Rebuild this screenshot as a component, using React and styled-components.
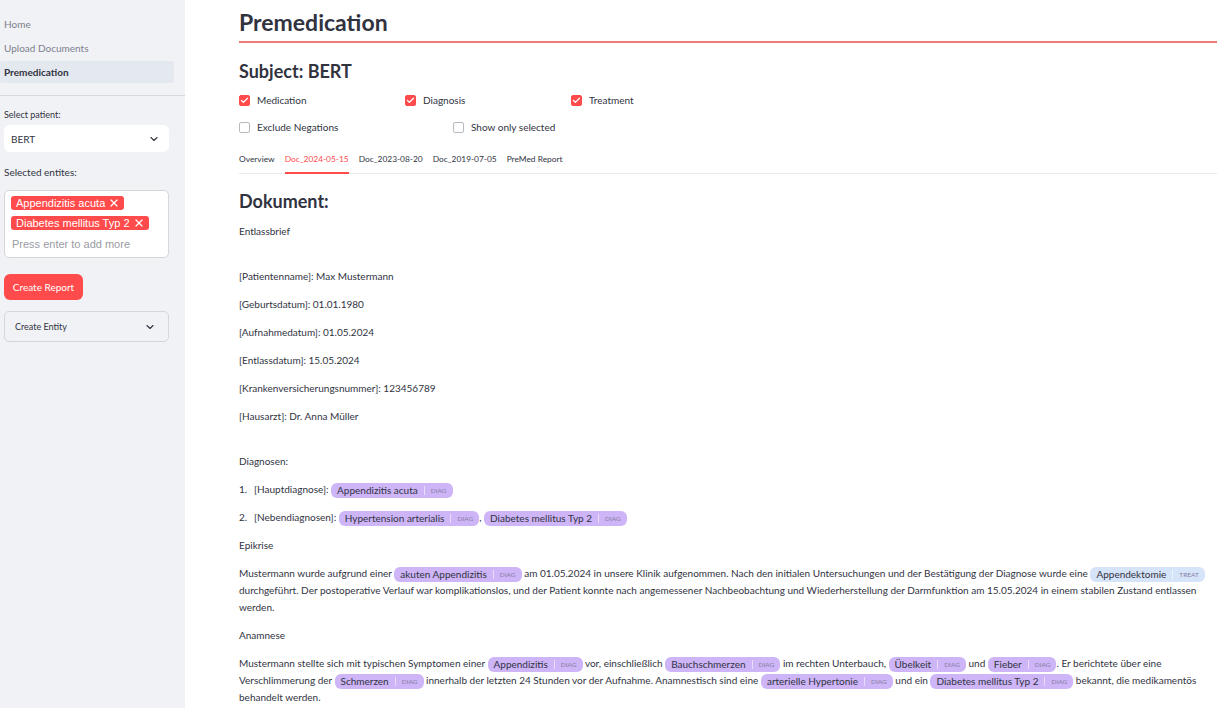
import styled, { createGlobalStyle } from 'styled-components'
import { ChevronDown, X, Check } from 'lucide-react'

const GlobalStyle = createGlobalStyle`
  html, body {
    margin: 0;
    padding: 0;
    background: #ffffff;
  }
  body {
    font-family: Lato, "Noto Sans", sans-serif;
    color: #31333f;
  }
  * {
    box-sizing: border-box;
  }
`

const colors = {
  text: '#31333f',
  red: '#ff4b4b',
  sidebar: '#f0f2f6',
  border: '#d6d6d9',
  diag: '#cdb5f7',
  treat: '#d6e4f9',
}

const Ent = ({ label, tag = 'DIAG' }) => (
  <Entity $kind={tag}>
    {label}
    <EntityTag>{tag}</EntityTag>
  </Entity>
)

const Box = ({ checked, label }) => (
  <CheckItem>
    <CheckSquare $checked={checked}>
      {checked && <Check size={9} strokeWidth={3.5} color="#fff" />}
    </CheckSquare>
    {label}
  </CheckItem>
)

const App = () => {
  const tabs = ['Overview', 'Doc_2024-05-15', 'Doc_2023-08-20', 'Doc_2019-07-05', 'PreMed Report']

  return (
    <>
      <GlobalStyle />
      <Layout>
        <Sidebar>
          <Nav>
            <NavItem>Home</NavItem>
            <NavItem>Upload Documents</NavItem>
            <NavItem $active>Premedication</NavItem>
          </Nav>
          <SideBody>
            <FieldLabel>Select patient:</FieldLabel>
            <SelectBox>
              BERT
              <ChevronDown size={12} strokeWidth={2.2} />
            </SelectBox>
            <FieldLabel $big>Selected entites:</FieldLabel>
            <MultiBox>
              <Pill>Appendizitis acuta <X size={12} strokeWidth={2.4} /></Pill>
              <Pill>Diabetes mellitus Typ 2 <X size={12} strokeWidth={2.4} /></Pill>
              <Placeholder>Press enter to add more</Placeholder>
            </MultiBox>
            <RedButton>Create Report</RedButton>
            <Expander>
              Create Entity
              <ChevronDown size={12} strokeWidth={2.2} />
            </Expander>
          </SideBody>
        </Sidebar>

        <Main>
          <Title>Premedication</Title>
          <Subtitle>Subject: BERT</Subtitle>
          <CheckRow $cols="166px 166px 166px">
            <Box checked label="Medication" />
            <Box checked label="Diagnosis" />
            <Box checked label="Treatment" />
          </CheckRow>
          <CheckRow $cols="214px 214px" $gap>
            <Box label="Exclude Negations" />
            <Box label="Show only selected" />
          </CheckRow>
          <Tabs>
            {tabs.map((t, i) => (
              <Tab key={t} $active={i === 1}>{t}</Tab>
            ))}
          </Tabs>

          <Subtitle $doc>Dokument:</Subtitle>
          <Para>Entlassbrief</Para>
          <Blank />
          <Para>[Patientenname]: Max Mustermann</Para>
          <Para>[Geburtsdatum]: 01.01.1980</Para>
          <Para>[Aufnahmedatum]: 01.05.2024</Para>
          <Para>[Entlassdatum]: 15.05.2024</Para>
          <Para>[Krankenversicherungsnummer]: 123456789</Para>
          <Para>[Hausarzt]: Dr. Anna Müller</Para>
          <Blank />
          <Para>Diagnosen:</Para>
          <ListItem>
            <Num>1.</Num>
            <span>[Hauptdiagnose]: <Ent label="Appendizitis acuta" /></span>
          </ListItem>
          <ListItem>
            <Num>2.</Num>
            <span>
              [Nebendiagnosen]: <Ent label="Hypertension arterialis" />, <Ent label="Diabetes mellitus Typ 2" />
            </span>
          </ListItem>
          <Para>Epikrise</Para>
          <Para>
            Mustermann wurde aufgrund einer <Ent label="akuten Appendizitis" /> am 01.05.2024 in unsere Klinik
            aufgenommen. Nach den initialen Untersuchungen und der Bestätigung der Diagnose wurde eine{' '}
            <Ent label="Appendektomie" tag="TREAT" /> durchgeführt. Der postoperative Verlauf war komplikationslos,
            und der Patient konnte nach angemessener Nachbeobachtung und Wiederherstellung der Darmfunktion am
            15.05.2024 in einem stabilen Zustand entlassen werden.
          </Para>
          <Para>Anamnese</Para>
          <Para>
            Mustermann stellte sich mit typischen Symptomen einer <Ent label="Appendizitis" /> vor, einschließlich{' '}
            <Ent label="Bauchschmerzen" /> im rechten Unterbauch, <Ent label="Übelkeit" /> und <Ent label="Fieber" />.
            Er berichtete über eine Verschlimmerung der <Ent label="Schmerzen" /> innerhalb der letzten 24 Stunden
            vor der Aufnahme. Anamnestisch sind eine <Ent label="arterielle Hypertonie" /> und ein{' '}
            <Ent label="Diabetes mellitus Typ 2" /> bekannt, die medikamentös behandelt werden.
          </Para>
        </Main>
      </Layout>
    </>
  )
}

const Layout = styled.div`
  display: flex;
  height: 708px;
  overflow: hidden;
`

const Sidebar = styled.aside`
  width: 185px;
  flex-shrink: 0;
  background: ${colors.sidebar};
  display: flex;
  flex-direction: column;
`

const Nav = styled.nav`
  display: flex;
  flex-direction: column;
  gap: 2px;
  padding: 13px 11px 12px 0;
  border-bottom: 1px solid #d5d8de;
`

const NavItem = styled.div`
  height: 22px;
  display: flex;
  align-items: center;
  padding-left: 4px;
  font-size: 10px;
  border-radius: 3px;
  color: ${(p) => (p.$active ? colors.text : '#7d808c')};
  font-weight: ${(p) => (p.$active ? 700 : 400)};
  background: ${(p) => (p.$active ? '#e4e8ef' : 'transparent')};
`

const SideBody = styled.div`
  display: flex;
  flex-direction: column;
  padding: 12px 16px 0 4px;
`

const FieldLabel = styled.div`
  font-size: ${(p) => (p.$big ? '10px' : '9px')};
  line-height: 14px;
  margin-bottom: ${(p) => (p.$big ? '11px' : '3px')};
  margin-top: ${(p) => (p.$big ? '13px' : '0')};
`

const SelectBox = styled.div`
  height: 27px;
  background: #fff;
  border-radius: 6px;
  display: flex;
  align-items: center;
  justify-content: space-between;
  padding: 0 9px 0 7px;
  font-size: 10px;
`

const MultiBox = styled.div`
  height: 68px;
  background: #fff;
  border: 1px solid ${colors.border};
  border-radius: 5px;
  padding: 5px 6px 0;
  display: flex;
  flex-direction: column;
  align-items: flex-start;
  gap: 6px;
`

const Pill = styled.span`
  height: 14px;
  display: inline-flex;
  align-items: center;
  gap: 3px;
  padding: 0 4px 0 5px;
  background: ${colors.red};
  color: #fff;
  border-radius: 3px;
  font-family: "Liberation Sans", Arial, sans-serif;
  font-size: 11px;
`

const Placeholder = styled.span`
  font-family: "Liberation Sans", Arial, sans-serif;
  font-size: 11px;
  color: #9a9ba3;
  padding-left: 1px;
  margin-top: 2px;
`

const RedButton = styled.button`
  align-self: flex-start;
  margin-top: 16px;
  height: 26px;
  width: 79px;
  border: none;
  border-radius: 6px;
  background: ${colors.red};
  color: #fff;
  font-family: inherit;
  font-size: 10px;
  padding: 0;
`

const Expander = styled.div`
  margin-top: 11px;
  height: 31px;
  border: 1px solid ${colors.border};
  border-radius: 5px;
  display: flex;
  align-items: center;
  justify-content: space-between;
  padding: 0 12px 0 10px;
  font-size: 9px;
`

const Main = styled.main`
  flex: 1;
  padding: 0 7px 0 54px;
  font-size: 10px;
`

const Title = styled.h1`
  margin: 0;
  padding: 7px 0 4px;
  line-height: 30px;
  font-size: 23px;
  font-weight: 700;
  border-bottom: 2px solid #f47a7a;
`

const Subtitle = styled.h2`
  margin: ${(p) => (p.$doc ? '16px 0 11px' : '17px 0 0')};
  line-height: 22px;
  font-size: 18px;
  font-weight: 700;
`

const CheckRow = styled.div`
  display: grid;
  grid-template-columns: ${(p) => p.$cols};
  margin-top: ${(p) => (p.$gap ? '11px' : '10px')};
  height: 16px;
`

const CheckItem = styled.label`
  display: flex;
  align-items: center;
  gap: 7px;
  font-size: 10px;
`

const CheckSquare = styled.span`
  width: 11px;
  height: 11px;
  border-radius: 2px;
  display: inline-flex;
  align-items: center;
  justify-content: center;
  background: ${(p) => (p.$checked ? colors.red : '#fff')};
  border: 1px solid ${(p) => (p.$checked ? colors.red : '#b9bac1')};
`

const Tabs = styled.div`
  display: flex;
  gap: 10px;
  margin-top: 16px;
  border-bottom: 1px solid #e8e9ec;
`

const Tab = styled.div`
  font-size: 8.4px;
  line-height: 12px;
  height: 23px;
  padding-top: 2px;
  color: ${(p) => (p.$active ? colors.red : colors.text)};
  border-bottom: 2px solid ${(p) => (p.$active ? colors.red : 'transparent')};
  margin-bottom: -1px;
`

const Para = styled.p`
  margin: 0 0 11px;
  line-height: 17px;
`

const Blank = styled.div`
  height: 17px;
`

const ListItem = styled.div`
  display: flex;
  line-height: 17px;
  margin-bottom: 11px;
`

const Num = styled.span`
  width: 15px;
  flex-shrink: 0;
`

const Entity = styled.span`
  display: inline-flex;
  align-items: center;
  height: 15px;
  padding: 0 6px;
  border-radius: 6px;
  vertical-align: middle;
  line-height: 15px;
  background: ${(p) => (p.$kind === 'TREAT' ? colors.treat : colors.diag)};
`

const EntityTag = styled.span`
  font-size: 6.5px;
  color: #877c9f;
  margin-left: 6px;
  padding-left: 6px;
  border-left: 1px solid rgba(255, 255, 255, 0.55);
  line-height: 9px;
`

export default App
